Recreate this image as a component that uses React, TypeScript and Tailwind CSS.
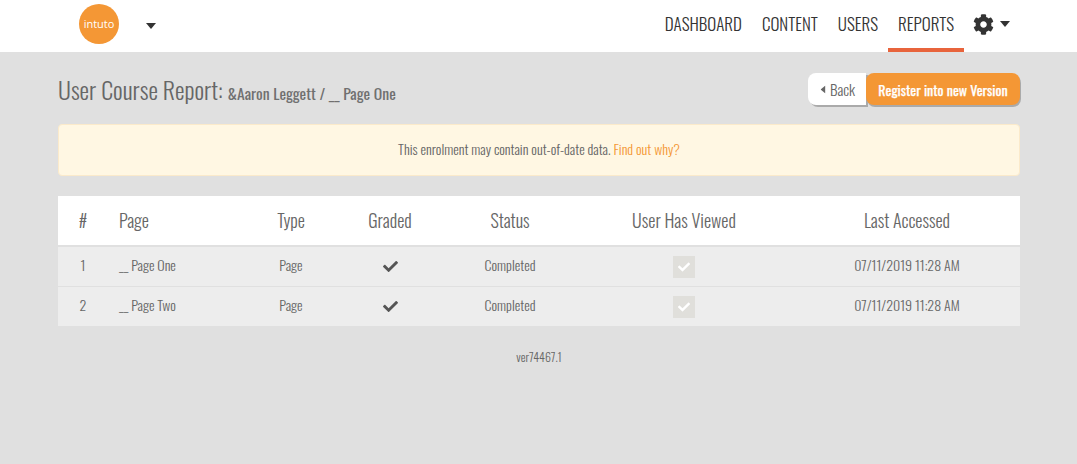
import { FaCog, FaCheck } from "react-icons/fa";

const font = "font-['Oswald','Liberation_Sans_Narrow','Liberation_Sans',sans-serif]";
const cell = "pb-[5px]";

const navItems = ["DASHBOARD", "CONTENT", "USERS", "REPORTS"];
const rows = [
  { id: 1, page: "__ Page One" },
  { id: 2, page: "__ Page Two" },
];
const grid = "grid grid-cols-[50px_140px_86px_112px_128px_220px_226px] items-center";

function Caret({ className }: { className: string }) {
  return (
    <svg viewBox="0 0 10 6" className={className} fill="currentColor">
      <path d="M0 0h10L5 6z" />
    </svg>
  );
}

export default function App() {
  return (
    <div className={`${font} h-[464px] w-full overflow-hidden bg-[#e0e0e0] font-light text-[#666]`}>
      <header className="flex h-[52px] items-center bg-white pl-[79px] pr-[67px]">
        <div className="mb-[4px] flex h-10 w-10 items-center justify-center rounded-full bg-[#f49735] font-['Open_Sans',sans-serif] text-[11px] font-normal text-white">
          intuto
        </div>
        <Caret className="ml-[27px] h-[6px] w-[10px] text-[#333]" />
        <nav className="ml-auto flex h-full items-center">
          {navItems.map((item) => (
            <a
              key={item}
              className={`flex h-full items-center border-b-[4px] px-[10px] text-[17px] text-[#333] ${
                item === "REPORTS" ? "border-[#e8643c]" : "border-transparent"
              }`}
            >
              {item}
            </a>
          ))}
          <div className="ml-[9px] flex items-center gap-[6px] pb-[4px] text-[#333]">
            <FaCog className="h-[21px] w-[21px]" />
            <Caret className="h-[6px] w-[10px]" />
          </div>
        </nav>
      </header>

      <main className="pl-[58px] pr-[57px]">
        <div className="flex h-[53px] items-end justify-between">
          <h1 className="mb-[-5px] text-[24px] leading-[34px]">
            User Course Report: <small className="text-[15.7px] font-normal text-[#707070]">&amp;Aaron Leggett / __ Page One</small>
          </h1>
          <div className="flex">
            <button className="flex h-[32px] w-[58px] items-center justify-center gap-[3px] rounded-l-[8px] bg-white text-[15px] shadow-[2px_2px_0_#aaa]">
              <Caret className="h-[5px] w-[8px] rotate-90" />
              Back
            </button>
            <button className="h-[32px] w-[154px] rounded-[8px] bg-[#f49735] text-[14px] font-normal text-white shadow-[1px_2px_0_#aaa] [-webkit-text-stroke:0.25px_white]">
              Register into new Version
            </button>
          </div>
        </div>

        <div className="mt-[19px] flex h-[52px] items-center justify-center rounded-[4px] border border-[#fbeacb] bg-[#fff7e3] pb-[4px] text-[14px]">
          <span>
            This enrolment may contain out-of-date data. <a className="text-[#f49735]">Find out why?</a>
          </span>
        </div>

        <section className="mt-[20px] text-center">
          <div className={`${grid} h-[51px] border-b-2 border-[#e0e0e0] bg-white pb-[1px] text-[18px]`}>
            <div>#</div>
            <div className="pl-[11px] text-left">Page</div>
            <div>Type</div>
            <div>Graded</div>
            <div>Status</div>
            <div>User Has Viewed</div>
            <div>Last Accessed</div>
          </div>
          {rows.map((row, i) => (
            <div
              key={row.id}
              className={`${grid} bg-[#ededed] text-[14px] ${i === 0 ? "h-[40px] border-b-[1px] border-[#e0e0e0]" : "h-[39px]"}`}
            >
              <div className={cell}>{row.id}</div>
              <div className={`${cell} pl-[11px] text-left`}>{row.page}</div>
              <div className={cell}>Page</div>
              <div className="flex justify-center">
                <FaCheck className="h-[15px] w-[15px] text-[#555]" />
              </div>
              <div className={cell}>Completed</div>
              <div className="flex justify-center">
                <span className="flex h-[22px] w-[22px] items-center justify-center bg-[#e0dfdb]">
                  <FaCheck className="h-[12px] w-[12px] text-white" />
                </span>
              </div>
              <div className={cell}>07/11/2019 11:28 AM</div>
            </div>
          ))}
        </section>

        <p className="mt-[22px] text-center text-[12px]">ver74467.1</p>
      </main>
    </div>
  );
}
